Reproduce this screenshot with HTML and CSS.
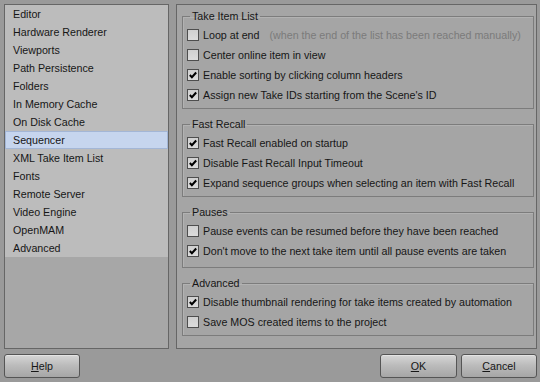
FILE: index.html
```html
<!DOCTYPE html>
<html lang="en">
<head>
  <meta charset="UTF-8">
  <title>Preferences</title>
  <link rel="stylesheet" href="styles.css">
</head>
<body>
  <div class="dialog">
    <div class="main">
      <ul class="pages">
        <li>Editor</li>
        <li>Hardware Renderer</li>
        <li>Viewports</li>
        <li>Path Persistence</li>
        <li>Folders</li>
        <li>In Memory Cache</li>
        <li>On Disk Cache</li>
        <li class="selected">Sequencer</li>
        <li>XML Take Item List</li>
        <li>Fonts</li>
        <li>Remote Server</li>
        <li>Video Engine</li>
        <li>OpenMAM</li>
        <li>Advanced</li>
      </ul>

      <div class="panel">
        <fieldset class="group">
          <legend>Take Item List</legend>
          <label class="row"><span class="box"></span>Loop at end<span class="hint">(when the end of the list has been reached manually)</span></label>
          <label class="row"><span class="box"></span>Center online item in view</label>
          <label class="row"><span class="box checked"><svg viewBox="0 0 11 11"><path d="M2 5.5 L4.3 8 L9 2.8"/></svg></span>Enable sorting by clicking column headers</label>
          <label class="row"><span class="box checked"><svg viewBox="0 0 11 11"><path d="M2 5.5 L4.3 8 L9 2.8"/></svg></span>Assign new Take IDs starting from the Scene's ID</label>
        </fieldset>

        <fieldset class="group">
          <legend>Fast Recall</legend>
          <label class="row"><span class="box checked"><svg viewBox="0 0 11 11"><path d="M2 5.5 L4.3 8 L9 2.8"/></svg></span>Fast Recall enabled on startup</label>
          <label class="row"><span class="box checked"><svg viewBox="0 0 11 11"><path d="M2 5.5 L4.3 8 L9 2.8"/></svg></span>Disable Fast Recall Input Timeout</label>
          <label class="row"><span class="box checked"><svg viewBox="0 0 11 11"><path d="M2 5.5 L4.3 8 L9 2.8"/></svg></span>Expand sequence groups when selecting an item with Fast Recall</label>
        </fieldset>

        <fieldset class="group pauses">
          <legend>Pauses</legend>
          <label class="row"><span class="box"></span>Pause events can be resumed before they have been reached</label>
          <label class="row"><span class="box checked"><svg viewBox="0 0 11 11"><path d="M2 5.5 L4.3 8 L9 2.8"/></svg></span>Don't move to the next take item until all pause events are taken</label>
        </fieldset>

        <fieldset class="group">
          <legend>Advanced</legend>
          <label class="row"><span class="box checked"><svg viewBox="0 0 11 11"><path d="M2 5.5 L4.3 8 L9 2.8"/></svg></span>Disable thumbnail rendering for take items created by automation</label>
          <label class="row"><span class="box"></span>Save MOS created items to the project</label>
        </fieldset>
      </div>
    </div>

    <div class="footer">
      <button type="button"><u>H</u>elp</button>
      <div class="actions">
        <button type="submit"><u>O</u>K</button>
        <button type="button"><u>C</u>ancel</button>
      </div>
    </div>
  </div>
</body>
</html>
```

FILE: styles.css
```css
* {
  box-sizing: border-box;
  font-family: 'Liberation Sans', Arial, sans-serif;
  font-size: 10.7px;
}

body {
  margin: 0;
  background: #9a9a9a;
  color: #161616;
}

.dialog {
  display: flex;
  flex-direction: column;
  height: 382px;
  padding: 4px 3px 4px 4px;
}

.main {
  display: grid;
  grid-template-columns: 165px 361px;
  gap: 7px;
  height: 345px;
}

/* page list */
.pages {
  margin: 0;
  padding: 0;
  list-style: none;
  border: 1px solid #666;
  background: linear-gradient(#bcbcbc 0 252px, #a7a7a7 252px);

  li {
    height: 18px;
    line-height: 18px;
    padding-left: 8px;
  }

  .selected {
    background: #c6d5ee;
    border: 1px solid #a3b6d6;
    line-height: 16px;
    padding-left: 7px;
  }
}

/* right side */
.panel {
  display: flex;
  flex-direction: column;
  gap: 8px;
  padding: 4px 2px 0 5px;
  border: 1px solid #666;
  background: #a5a5a5;
}

.group {
  margin: 0;
  padding: 2px 0 3px 4px;
  border: 1px solid #7c7c7c;
  box-shadow: inset 1px 1px 0 #b2b2b2;

  legend {
    margin-left: 3px;
    padding: 0 2px;
    line-height: 14px;
  }
}

.group.pauses {
  padding-bottom: 6px;
}

.row {
  display: flex;
  align-items: center;
  height: 20px;
  white-space: nowrap;
}

.box {
  display: inline-flex;
  width: 12px;
  height: 12px;
  margin-right: 4px;
  border: 1px solid #4e4e4e;
  background: linear-gradient(#d0d0d0, #dcdcdc);

  svg {
    width: 10px;
    height: 10px;
    fill: none;
    stroke: #000;
    stroke-width: 2.2;
  }
}

.hint {
  margin-left: 10px;
  color: #7b7b7b;
}

/* buttons */
.footer {
  display: flex;
  justify-content: space-between;
  margin-top: 5px;
}

.actions {
  display: flex;
  gap: 4px;
}

button {
  width: 76px;
  height: 24px;
  padding: 0;
  border: 1px solid #555;
  border-radius: 3px;
  background: linear-gradient(#d6d6d6, #bababa 50%, #a6a6a6);
  box-shadow: inset 0 1px 0 #e4e4e4;
  color: #161616;
  cursor: pointer;

  u {
    font-size: inherit;
  }
}

.actions button:first-child {
  width: 77px;
}
```
